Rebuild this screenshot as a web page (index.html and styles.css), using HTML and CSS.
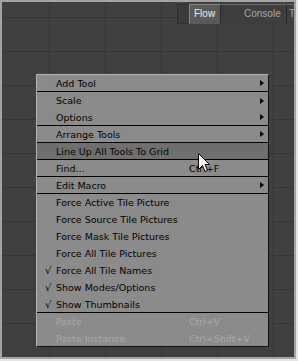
FILE: index.html
```html
<!DOCTYPE html>
<html lang="en">
<head>
    <meta charset="UTF-8">
    <title>Flow</title>
    <link rel="stylesheet" href="styles.css">
</head>
<body>
    <div class="window">
        <div class="canvas">
            <div class="tabbar">
                <div class="tab-lead"></div>
                <div class="tab active">Flow</div>
                <div class="tab console">Console</div>
                <div class="tab tab-cut">T</div>
            </div>

            <!-- right-click context menu -->
            <div class="menu">
                <div class="item sep"><span class="check"></span><span class="label">Add Tool</span><span class="key"></span><span class="arrow"></span></div>
                <div class="item"><span class="check"></span><span class="label">Scale</span><span class="key"></span><span class="arrow"></span></div>
                <div class="item sep"><span class="check"></span><span class="label">Options</span><span class="key"></span><span class="arrow"></span></div>
                <div class="item sep"><span class="check"></span><span class="label">Arrange Tools</span><span class="key"></span><span class="arrow"></span></div>
                <div class="item sep hover"><span class="check"></span><span class="label">Line Up All Tools To Grid</span><span class="key"></span></div>
                <div class="item sep"><span class="check"></span><span class="label">Find...</span><span class="key">Ctrl+F</span></div>
                <div class="item sep"><span class="check"></span><span class="label">Edit Macro</span><span class="key"></span><span class="arrow"></span></div>
                <div class="item"><span class="check"></span><span class="label">Force Active Tile Picture</span></div>
                <div class="item"><span class="check"></span><span class="label">Force Source Tile Pictures</span></div>
                <div class="item"><span class="check"></span><span class="label">Force Mask Tile Pictures</span></div>
                <div class="item"><span class="check"></span><span class="label">Force All Tile Pictures</span></div>
                <div class="item"><span class="check">&radic;</span><span class="label">Force All Tile Names</span></div>
                <div class="item"><span class="check">&radic;</span><span class="label">Show Modes/Options</span></div>
                <div class="item sep"><span class="check">&radic;</span><span class="label">Show Thumbnails</span></div>
                <div class="item disabled"><span class="check"></span><span class="label">Paste</span><span class="key">Ctrl+V</span></div>
                <div class="item disabled last"><span class="check"></span><span class="label">Paste Instance</span><span class="key">Ctrl+Shift+V</span></div>
            </div>

            <svg class="cursor" width="12" height="19" viewBox="0 0 12 19">
                <path d="M0.5 0.5 L0.5 16.5 L4.5 12.5 L7 18.5 L9.5 17.5 L7 11.5 L11.5 11.5 Z" fill="#fff" stroke="#000" stroke-width="1"/>
            </svg>
        </div>
    </div>
</body>
</html>
```

FILE: styles.css
```css
body {
    margin: 0;
    background-color: #e6e6e6;
    font-family: "DejaVu Sans", Verdana, sans-serif;
}

.window {
    width: 298px;
    height: 361px;
    box-sizing: border-box;
    padding: 0 2px 2px 0;
    background-color: #e6e6e6;
}

.canvas {
    position: relative;
    height: 100%;
    box-sizing: border-box;
    border: 2px solid #a4a4a4;
    background-color: #404040;
    background-image:
        linear-gradient(to right, #353535 1px, transparent 1px),
        linear-gradient(to bottom, #353535 1px, transparent 1px);
    background-size: 56px 34px;
    background-position: 47px 15px;
    overflow: hidden;
}

/* tab strip in the top right */
.tabbar {
    display: flex;
    justify-content: flex-end;
    margin-top: 2px;
    height: 20px;
    font-family: "Liberation Sans", Arial, sans-serif;
    font-size: 10px;
}

.tab-lead {
    width: 12px;
    box-sizing: border-box;
    border: 1px solid #2e2e2e;
    border-right: none;
    background-color: #3b3b3b;
}

.tab {
    box-sizing: border-box;
    line-height: 18px;
    color: #a9a9a9;
    border-top: 1px solid #6a6a6a;
    border-right: 1px solid #262626;
    background-color: #3e3e3e;
}

.tab.active {
    width: 32px;
    padding-left: 4px;
    color: #ececec;
    background-color: #5a5a5a;
    border: 1px solid #8a8a8a;
    border-right-color: #262626;
    border-bottom-color: #5a5a5a;
}

.tab.console {
    width: 66px;
    padding-left: 23px;
}

.tab-cut {
    width: 7px;
    padding-left: 2px;
    border-right: none;
}

/* context menu */
.menu {
    position: absolute;
    left: 34px;
    top: 72px;
    width: 233px;
    box-sizing: border-box;
    background-color: #8b8b8b;
    border-top: 1px solid #b2b2b2;
    border-left: 1px solid #b2b2b2;
    border-right: 1px solid #111;
    border-bottom: 1px solid #111;
}

.item {
    display: grid;
    grid-template-columns: 19px 133px 1fr 12px;
    align-items: center;
    height: 17px;
    box-sizing: border-box;
    font-size: 9.5px;
    color: #000;
    white-space: nowrap;
}

.item.sep {
    border-bottom: 1px solid #000;
}

.item.hover {
    background-color: #6f6f6f;
}

.item.disabled {
    color: #a9a9a9;
}

.item.last {
    height: 16px;
}

.check {
    padding-left: 8px;
    font-size: 10px;
}

.arrow {
    width: 0;
    height: 0;
    border-top: 3px solid transparent;
    border-bottom: 3px solid transparent;
    border-left: 4px solid #000;
    margin-left: 4px;
}

.cursor {
    position: absolute;
    left: 196px;
    top: 151px;
}
```
